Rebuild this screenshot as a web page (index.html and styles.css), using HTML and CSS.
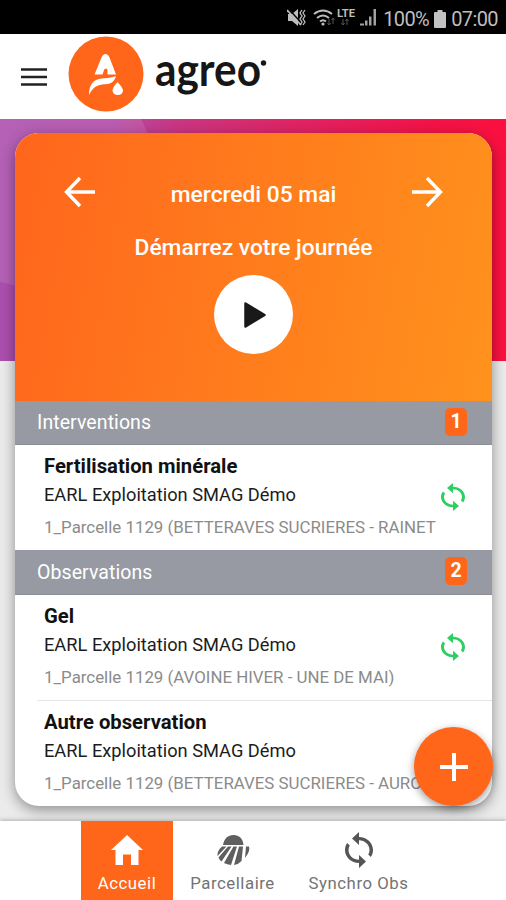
FILE: index.html
```html
<!DOCTYPE html>
<html lang="fr">
<head>
<meta charset="utf-8">
<title>agreo</title>
<link rel="stylesheet" href="styles.css">
</head>
<body>
<div class="status">
  <svg class="status-icons" viewBox="0 0 92 24" width="92" height="24">
    <path d="M1 8h4l6-5v17l-6-5H1z" fill="#bdbdbd"/>
    <path d="M1 2.500l15 16" stroke="#000" stroke-width="1.500"/>
    <path d="M0 4l14 15" stroke="#bdbdbd" stroke-width="1.800"/>
    <path d="M15 4l-2 3 2 3-2 3 2 3-2 3M18 4l-2 3 2 3-2 3 2 3-2 3" fill="none" stroke="#bdbdbd" stroke-width="1.300"/>
    <g fill="none" stroke="#bdbdbd" stroke-width="2">
      <path d="M27 8q9-7 18 0M30 12q6-5 12 0M33 15.500q3-2.500 6 0"/>
    </g>
    <circle cx="36" cy="18" r="1.600" fill="#bdbdbd"/>
    <path d="M42 13v6m-1.500-2l1.500 2 1.500-2M46 18v-6m-1.500 2l1.500-2 1.500 2M56 13v6m-1.500-2l1.500 2 1.500-2M60 19v-6m-1.500 2l1.500-2 1.500 2" fill="none" stroke="#555" stroke-width="1"/>
    <text class="lte" x="50" y="11" textLength="18" lengthAdjust="spacingAndGlyphs">LTE</text>
    <path d="M73 19.500v-2h4v2zM78 19.500v-5h2.500v5zM82 19.500v-9h2.500v9zM86.500 19.500V3H89v16.500z" fill="#a0a0a0"/>
  </svg>
  <span class="percent">100%</span>
  <svg class="battery" viewBox="0 0 12 18" width="12" height="18"><path d="M3.500 0h5v2H11q1 0 1 1v14q0 1-1 1H1q-1 0-1-1V3q0-1 1-1h2.500z" fill="#c2c2c2"/></svg>
  <span class="clock">07:00</span>
</div>

<header class="header">
  <svg class="menu" viewBox="0 0 26 18" width="26" height="18"><path d="M0 1.500h26M0 9h26M0 16.500h26" stroke="#222" stroke-width="2.400"/></svg>
  <svg class="logo" viewBox="0 0 76 76" width="76" height="76">
    <circle cx="38" cy="38" r="37.500" fill="#ff661a"/>
    <path d="M26.500 38.500L33.500 21.500q1.500-3.500 4-3.500t4 3.500L48 38.500h-8.500v-4q0-2-1.500-2t-2 1.500l-1.500 4.500z" fill="#fff"/>
    <path d="M21 59c0-10 4-16 13-16.500q8-.5 14-2.200c-1.500 5-5 8-11 8-8 .7-12 2.500-16 10.700z" fill="#fff"/>
    <path d="M49.500 46q5.500 6 5.500 8.500a5.300 5.300 0 0 1-10.500 0q0-3 5-8.500z" fill="#fff"/>
  </svg>
  <svg class="wordmark" viewBox="0 0 120 76" width="120" height="76"><text x="2" y="48" textLength="106" lengthAdjust="spacingAndGlyphs">agreo</text><circle cx="110.500" cy="25" r="2.700" fill="#161616"/></svg>
</header>

<main class="main">
  <section class="card">
    <div class="day">
      <div class="date-row">
        <svg viewBox="0 0 32 32" width="32" height="32"><path d="M31 16H3M16 2L2.500 16 16 30" class="arrow"/></svg>
        <span class="date">mercredi 05 mai</span>
        <svg viewBox="0 0 32 32" width="32" height="32"><path d="M1 16h28M16 2l13.500 14L16 30" class="arrow"/></svg>
      </div>
      <div class="start">Démarrez votre journée</div>
      <div class="play"><svg viewBox="0 0 24 28" width="24" height="28"><path d="M2.500 2.500l19 11.500L2.500 25.500z" fill="#191919" stroke="#191919" stroke-width="2.500" stroke-linejoin="round"/></svg></div>
    </div>
    <div class="group"><span>Interventions</span><b class="badge">1</b></div>
    <article class="item">
      <div class="texts">
        <h3>Fertilisation minérale</h3>
        <p class="farm">EARL Exploitation SMAG Démo</p>
        <p class="plot">1_Parcelle 1129 (BETTERAVES SUCRIERES - RAINET</p>
      </div>
      <svg class="sync" viewBox="4 1 16 22" width="24" height="28" preserveAspectRatio="none"><use href="#sync"/></svg>
    </article>
    <div class="group second"><span>Observations</span><b class="badge">2</b></div>
    <article class="item">
      <div class="texts">
        <h3>Gel</h3>
        <p class="farm">EARL Exploitation SMAG Démo</p>
        <p class="plot">1_Parcelle 1129 (AVOINE HIVER - UNE DE MAI)</p>
      </div>
      <svg class="sync" viewBox="4 1 16 22" width="24" height="28" preserveAspectRatio="none"><use href="#sync"/></svg>
    </article>
    <article class="item last">
      <div class="texts">
        <h3>Autre observation</h3>
        <p class="farm">EARL Exploitation SMAG Démo</p>
        <p class="plot">1_Parcelle 1129 (BETTERAVES SUCRIERES - AURO</p>
      </div>
    </article>
  </section>
  <div class="fab"><svg viewBox="0 0 30 30" width="30" height="30"><path d="M15 1v28M1 15h28" stroke="#fff" stroke-width="4"/></svg></div>
</main>

<nav class="nav">
  <div class="tab active">
    <svg viewBox="0 0 34 32" width="34" height="32"><path d="M17 1l16 15h-4.500v15H21V20.500h-8V31H5.500V16H1z" fill="#fff"/></svg>
    <span>Accueil</span>
  </div>
  <div class="tab field">
    <svg viewBox="0 0 34 32" width="34" height="32" fill="#5f5f5f">
      <path d="M7 11C8 4.500 12 1 17.500 1S27 4.500 27.500 11z"/>
      <path d="M6 12.500h4.500L1.500 22q-.5-5 4.500-9.500zM12 12.500h3.500L5.500 27.500q-2-1.500-3-4zM17.500 12.500H21L15 31q-4-.3-7-2zM23 12.500h4l-1.500 14.500q-2.500 3-7.500 4zM30 12.500h3q1.500 4-4 11.500z"/>
    </svg>
    <span>Parcellaire</span>
  </div>
  <div class="tab obs">
    <svg viewBox="4 1 16 22" width="28" height="36" preserveAspectRatio="none"><use href="#sync"/></svg>
    <span>Synchro Obs</span>
  </div>
</nav>

<svg class="defs" width="0" height="0">
  <defs>
    <path id="sync" d="M12 4V1L8 5l4 4V6c3.310 0 6 2.690 6 6 0 1.010-.25 1.970-.7 2.800l1.460 1.460C19.540 15.030 20 13.570 20 12c0-4.420-3.580-8-8-8zm0 14c-3.310 0-6-2.690-6-6 0-1.010.25-1.970.7-2.800L5.240 7.740C4.460 8.970 4 10.430 4 12c0 4.420 3.580 8 8 8v3l4-4-4-4v3z"/>
  </defs>
</svg>
</body>
</html>
```
FILE: styles.css
```css
* { box-sizing: border-box; }
body {
  margin: 0;
  width: 506px;
  height: 900px;
  display: flex;
  flex-direction: column;
  overflow: hidden;
  font-family: Roboto, "Liberation Sans", sans-serif;
  background: #fff;
}
h3, p { margin: 0; white-space: nowrap; }
svg { display: block; flex: none; }
.defs { position: absolute; }

.status {
  height: 34px;
  flex: none;
  display: flex;
  align-items: center;
  justify-content: flex-end;
  padding: 3px 8px 0 0;
  background: #000;
  color: #bebebe;
  font-size: 20px;
}
.status-icons { margin: -1px 4px 0 0; }
.lte { font: bold 11px Roboto, sans-serif; fill: #bdbdbd; }
.battery { margin: 0 5px; }
.percent { letter-spacing: -0.6px; }
.clock { letter-spacing: -0.6px; }

.header {
  height: 85px;
  flex: none;
  display: flex;
  align-items: center;
  padding: 0 0 5px 21px;
  background: #fff;
  position: relative;
  box-shadow: 0 1px 4px rgba(0, 0, 0, 0.55);
}
.menu { margin-top: 5px; }
.logo { margin-left: 20.500px; }
.wordmark { margin: 4px 0 0 9px; overflow: visible; }
.wordmark text { font: bold 45px Lato, sans-serif; fill: #161616; }

.main {
  height: 702px;
  flex: none;
  position: relative;
  padding: 14px 14px 15px 15px;
  background:
    radial-gradient(circle at 37px 52px, rgba(255, 255, 255, 0.1) 0 116px, transparent 117px) 0 0 / 100% 242px no-repeat,
    linear-gradient(90deg, #ab4fae 0, #b34aa8 22%, #cb3580 36%, #dc2668 55%, #f31348 85%, #fb103f) 0 0 / 100% 242px no-repeat,
    #ebebeb;
}
.card {
  height: 673px;
  border-radius: 24px;
  overflow: hidden;
  background: #fff;
  box-shadow: 0 4px 14px rgba(0, 0, 0, 0.4);
}
.day {
  height: 268px;
  display: flex;
  flex-direction: column;
  align-items: center;
  padding: 43px 49px 0;
  background: linear-gradient(100deg, #ff661c, #ff921d);
  color: #fff;
  font-weight: 500;
  font-size: 22.750px;
}
.date-row {
  align-self: stretch;
  display: flex;
  justify-content: space-between;
  height: 32px;
}
.date { line-height: 37px; }
.arrow { fill: none; stroke: #fff; stroke-width: 3.4; }
.start { line-height: 30px; margin-top: 25px; }
.play {
  width: 79px;
  height: 79px;
  margin-top: 12px;
  border-radius: 50%;
  background: #fff;
  display: grid;
  place-items: center;
  padding-left: 3px;
}

.group {
  height: 44px;
  display: flex;
  justify-content: space-between;
  align-items: center;
  padding: 0 25px 0 22px;
  background: #979aa2;
  border-bottom: 1px solid #8b8e96;
  color: #fff;
  font-size: 19.500px;
  letter-spacing: 0.080px;
}
.second { height: 45px; }
.badge {
  width: 22px;
  height: 28px;
  margin-top: -2px;
  border-radius: 5px;
  background: #ff661a;
  text-align: center;
  line-height: 27px;
  font-size: 19.500px;
  letter-spacing: 0;
}
.item {
  height: 105px;
  display: flex;
  justify-content: space-between;
  margin-left: 22px;
  padding: 9px 27px 0 7px;
}
.texts { width: 392px; }
.item h3 { font-size: 20.250px; line-height: 25px; font-weight: 700; color: #111; }
.farm { font-size: 18.250px; line-height: 24px; margin-top: 4px; color: #1c1c1c; }
.plot { font-size: 16.880px; line-height: 22px; margin-top: 9px; color: #8b8b8b; }
.sync { margin: 29px 0 0 5px; fill: #2ccf62; }
.last { height: 106px; border-top: 1px solid #e5e5e5; }

.fab {
  position: absolute;
  left: 414px;
  top: 608px;
  width: 79px;
  height: 79px;
  border-radius: 50%;
  background: #ff661a;
  box-shadow: 0 3px 9px rgba(0, 0, 0, 0.4);
  display: grid;
  place-items: center;
}

.nav {
  height: 79px;
  flex: none;
  position: relative;
  display: flex;
  justify-content: center;
  background: #fff;
  box-shadow: 0 -1px 4px rgba(0, 0, 0, 0.25);
}
.tab {
  display: flex;
  flex-direction: column;
  align-items: center;
  color: #737373;
  font-size: 16.750px;
  letter-spacing: 0.550px;
  padding-top: 13px;
}
.tab span { line-height: 20px; margin-top: 7px; }
.active { width: 92px; background: #ff661a; color: #fff; }
.field { width: 119px; }
.obs { width: 133px; padding-top: 11px; fill: #555; }
.obs span { margin-top: 5px; }
```
